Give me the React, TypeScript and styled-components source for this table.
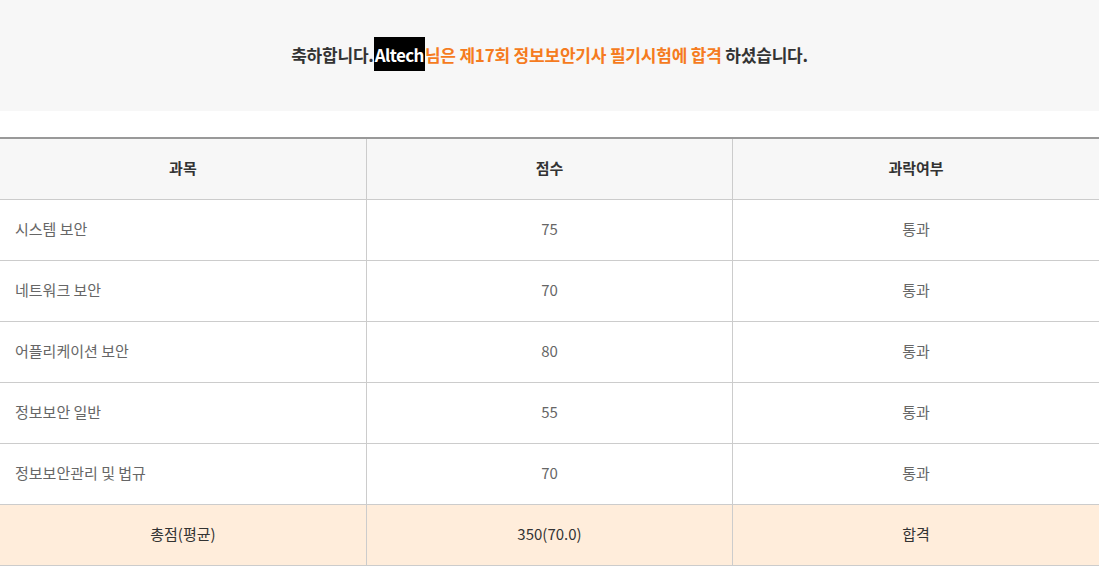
import React from "react";
import styled, { createGlobalStyle } from "styled-components";

const GlobalStyle = createGlobalStyle`
  html, body {
    margin: 0;
    padding: 0;
    background: #fff;
    font-family: "Noto Sans CJK KR", "Noto Sans", sans-serif;
  }
`;

interface Subject {
  name: string;
  score: string;
  result: string;
}

const subjects: Subject[] = [
  { name: "시스템 보안", score: "75", result: "통과" },
  { name: "네트워크 보안", score: "70", result: "통과" },
  { name: "어플리케이션 보안", score: "80", result: "통과" },
  { name: "정보보안 일반", score: "55", result: "통과" },
  { name: "정보보안관리 및 법규", score: "70", result: "통과" },
];

const Banner = styled.div`
  height: 111px;
  box-sizing: border-box;
  padding-bottom: 3px;
  background: #f7f7f7;
  display: flex;
  align-items: center;
  justify-content: center;
  font-size: 17px;
  font-weight: 700;
  color: #333;
  letter-spacing: -0.2px;
`;

const UserName = styled.span`
  background: #000;
  color: #fff;
  padding: 5px 1px 4px;
  letter-spacing: -0.6px;
`;

const Highlight = styled.span`
  color: #f57b20;
`;

const ScoreTable = styled.table`
  width: 100%;
  margin-top: 26px;
  border-collapse: collapse;
  border-top: 2px solid #999;
  table-layout: fixed;
  font-size: 15px;
`;

const HeadCell = styled.th`
  height: 57px;
  padding: 0 0 3px;
  background: #f7f7f7;
  color: #333;
  font-weight: 700;
  border-bottom: 1px solid #ccc;
  border-left: 1px solid #ccc;
  &:first-child {
    border-left: none;
  }
`;

const Cell = styled.td<{ $left?: boolean; $total?: boolean }>`
  height: 57px;
  padding: 0 ${({ $left }) => ($left ? "15px" : "0")} 3px;
  text-align: ${({ $left }) => ($left ? "left" : "center")};
  color: ${({ $total }) => ($total ? "#333" : "#666")};
  background: ${({ $total }) => ($total ? "#ffeddb" : "#fff")};
  border-bottom: 1px solid #ccc;
  border-left: 1px solid #ccc;
  &:first-child {
    border-left: none;
  }
`;

export default function App() {
  return (
    <>
      <GlobalStyle />
      <Banner>
        축하합니다.<UserName>Altech</UserName>
        <Highlight>님은 제17회 정보보안기사 필기시험에 합격</Highlight>&nbsp;하셨습니다.
      </Banner>
      <ScoreTable>
        <thead>
          <tr>
            <HeadCell>과목</HeadCell>
            <HeadCell>점수</HeadCell>
            <HeadCell>과락여부</HeadCell>
          </tr>
        </thead>
        <tbody>
          {subjects.map((s) => (
            <tr key={s.name}>
              <Cell $left>{s.name}</Cell>
              <Cell>{s.score}</Cell>
              <Cell>{s.result}</Cell>
            </tr>
          ))}
          <tr>
            <Cell $total>총점(평균)</Cell>
            <Cell $total>350(70.0)</Cell>
            <Cell $total>합격</Cell>
          </tr>
        </tbody>
      </ScoreTable>
    </>
  );
}
